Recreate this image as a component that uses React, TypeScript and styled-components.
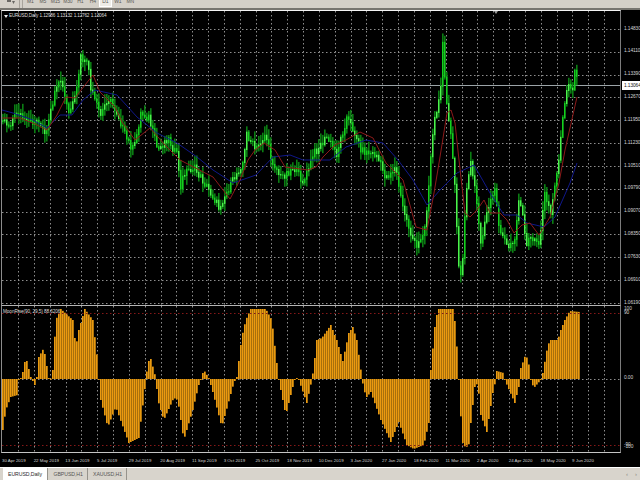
import React from "react";
import styled, { createGlobalStyle } from "styled-components";

type Pt = [number, number];

const GlobalStyle = createGlobalStyle`
  html, body { margin: 0; padding: 0; background: #000; }
  body { font-family: "Liberation Sans", Arial, sans-serif; }
`;

const lerp = (pts: Pt[], x: number) => {
  if (x <= pts[0][0]) return pts[0][1];
  for (let i = 1; i < pts.length; i++) {
    if (x <= pts[i][0]) {
      const [x0, y0] = pts[i - 1];
      const [x1, y1] = pts[i];
      return y0 + ((y1 - y0) * (x - x0)) / (x1 - x0);
    }
  }
  return pts[pts.length - 1][1];
};

const rnd = (n: number) => {
  const v = Math.sin(n * 12.9898) * 43758.5453;
  return v - Math.floor(v);
};

const priceKeys: Pt[] = [
  [2,117],[8,125],[17,110],[25,123],[38,120],[45,137],[53,97],[60,80],[68,113],[75,97],[80,57],[88,67],[90,90],[100,115],[107,97],[117,113],[125,137],[133,150],[140,113],[148,117],[157,150],[167,137],[177,157],[180,190],[183,172],[193,167],[200,177],[213,197],[218,207],[228,188],[236,173],[243,160],[246,133],[255,150],[265,133],[270,157],[280,177],[293,167],[303,182],[313,153],[326,137],[336,153],[346,117],[353,130],[361,150],[376,155],[385,177],[395,167],[401,203],[410,233],[416,248],[425,223],[429,170],[432,133],[440,83],[442,43],[445,97],[449,127],[452,157],[454,180],[459,287],[462,260],[465,193],[470,163],[475,193],[480,243],[485,217],[494,190],[499,230],[507,247],[514,237],[519,193],[525,243],[532,237],[539,243],[544,190],[550,213],[555,180],[560,140],[564,100],[567,80],[572,87],[575,63],[577,87],
];
const redKeys: Pt[] = [
  [2,118],[20,118],[35,124],[47,130],[57,115],[66,97],[75,98],[85,85],[93,75],[100,92],[115,107],[122,122],[135,140],[150,128],[165,145],[180,160],[213,177],[230,199],[240,180],[248,160],[255,150],[264,143],[275,150],[285,167],[308,170],[316,167],[323,157],[335,145],[346,140],[360,132],[373,138],[386,163],[403,180],[416,227],[427,230],[434,193],[440,157],[447,113],[451,110],[455,123],[459,160],[465,213],[470,217],[477,210],[484,200],[490,213],[500,213],[507,220],[514,233],[522,225],[530,223],[539,235],[550,217],[559,183],[565,150],[577,97],
];
const blueKeys: Pt[] = [
  [2,110],[13,113],[33,120],[47,128],[60,115],[72,115],[83,100],[95,90],[117,95],[137,117],[157,133],[177,143],[197,157],[213,170],[233,183],[256,175],[273,157],[290,155],[303,160],[330,160],[346,147],[366,140],[383,143],[398,160],[413,180],[427,205],[440,190],[457,173],[474,165],[490,193],[504,215],[517,215],[527,223],[544,227],[555,217],[570,183],[577,163],
];
const histKeys: Pt[] = [
  [2,430],[5,410],[10,397],[17,395],[18,380],[21,377],[25,357],[30,377],[35,387],[38,357],[43,348],[48,378],[49,383],[52,370],[55,320],[60,309],[72,320],[75,347],[78,330],[84,309],[92,320],[97,363],[98,380],[100,400],[107,427],[115,407],[128,443],[138,438],[145,381],[147,362],[150,359],[155,378],[157,400],[163,420],[173,398],[177,400],[183,440],[192,410],[198,385],[203,370],[208,378],[212,392],[221,427],[233,383],[236,377],[241,337],[245,320],[250,309],[265,309],[271,320],[276,363],[278,380],[285,415],[293,383],[295,377],[298,380],[306,403],[311,380],[313,367],[316,340],[321,338],[330,325],[336,340],[342,361],[348,333],[352,327],[356,340],[361,377],[363,390],[366,397],[370,392],[380,420],[390,442],[398,422],[406,445],[413,449],[423,445],[428,423],[429.5,381],[430,370],[434,327],[437,309],[453,309],[455,333],[457,360],[458,380],[459,403],[462,443],[465,448],[469,443],[470,423],[474,387],[477,383],[480,415],[486,432],[492,393],[495,380],[496,371],[503,373],[504,380],[514,403],[519,383],[520,368],[525,354],[529,368],[530,380],[533,388],[540,380],[542,373],[547,345],[550,340],[557,340],[560,330],[564,320],[569,311],[579,312],
];

const barXs = Array.from({ length: 289 }, (_, i) => 2 + i * 2);
const gridXs = Array.from({ length: 38 }, (_, i) => 18 + i * 15.84);
const mainGridYs = Array.from({ length: 13 }, (_, i) => 29 + i * 22.83);
const prices = ["1.14830","1.14110","1.13390","1.12670","1.11950","1.11230","1.10510","1.09790","1.09070","1.08350","1.07630","1.06910","1.06190"];
const dates = ["30 Apr 2019","22 May 2019","13 Jun 2019","5 Jul 2019","29 Jul 2019","20 Aug 2019","11 Sep 2019","3 Oct 2019","25 Oct 2019","18 Nov 2019","10 Dec 2019","3 Jan 2020","27 Jan 2020","18 Feb 2020","11 Mar 2020","2 Apr 2020","24 Apr 2020","18 May 2020","9 Jun 2020"];
const periods = ["M1","M5","M15","M30","H1","H4","D1","W1","MN"];
const tabs = ["EURUSD,Daily","GBPUSD,H1","XAUUSD,H1"];
const subLabels: [string, number][] = [["100", 1],["90", 5],["0.00", 70],["-90", 137],["-100", 139]];

const toPoints = (pts: Pt[]) => pts.map((p) => p.join(",")).join(" ");

const Screen = styled.div`
  width: 640px;
  height: 480px;
  display: flex;
  flex-direction: column;
  overflow: hidden;
  background: #000;
`;
const Toolbar = styled.div`
  height: 8px;
  flex: none;
  background: #d4d0c8;
  border-bottom: 2px solid #77756f;
  display: flex;
  overflow: hidden;
`;
const ToolIcon = styled.svg`
  width: 9px;
  height: 5px;
  margin-left: 6px;
  flex: none;
`;
const ToolDivider = styled.i`
  width: 1px;
  height: 8px;
  margin-left: ${(p: { $gap: number }) => p.$gap}px;
  background: #a8a49c;
  flex: none;
`;
const PeriodGroup = styled.div`
  display: flex;
  margin-left: 1px;
  height: 8px;
`;
const Period = styled.span<{ $active?: boolean }>`
  width: 12.5px;
  height: 7px;
  box-sizing: border-box;
  text-align: center;
  font-size: 5px;
  line-height: 3px;
  letter-spacing: -0.2px;
  color: #5c5a56;
  background: ${(p) => (p.$active ? "#eeece6" : "transparent")};
  border: 1px solid ${(p) => (p.$active ? "#fff" : "transparent")};
  border-top: 0;
`;
const Pane = styled.div<{ $h: number }>`
  height: ${(p) => p.$h}px;
  flex: none;
  display: grid;
  grid-template-columns: 621px 19px;
`;
const Plot = styled.div<{ $top: string; $bottom?: string }>`
  box-sizing: border-box;
  border-top: 1px solid ${(p) => p.$top};
  border-bottom: ${(p) => (p.$bottom ? `1px solid ${p.$bottom}` : "0")};
  border-left: 1px solid #8c8c8c;
  border-right: 1px solid #7c7c7c;
  margin-left: 1px;
  overflow: hidden;
`;
const ChartSvg = styled.svg`
  display: block;
  width: 619px;
  filter: blur(0.35px);
`;
const Axis = styled.div`
  position: relative;
  display: flex;
  flex-direction: column;
  padding-top: 7.6px;
  font-size: 4.8px;
  letter-spacing: -0.08px;
  color: #d4d4d4;
`;
const PriceLabel = styled.div`
  height: 22.83px;
  line-height: 22.83px;
  padding-left: 3px;
  white-space: nowrap;
  flex: none;
`;
const CurrentPrice = styled.div`
  position: absolute;
  left: 1px;
  top: 71px;
  width: 18px;
  height: 9px;
  line-height: 9px;
  padding-left: 2px;
  box-sizing: border-box;
  background: #fff;
  color: #111;
`;
const SubLabel = styled.div<{ $top: number }>`
  position: absolute;
  left: 3px;
  top: ${(p) => p.$top}px;
  line-height: 6px;
`;
const Title = styled.div`
  position: absolute;
  white-space: nowrap;
  font-size: 4.7px;
  line-height: 6px;
  color: #dcdcdc;
`;
const PlotBox = styled.div`
  position: relative;
`;
const MainTitle = styled(Title)`
  left: 7px;
  top: 2px;
  letter-spacing: -0.2px;
  word-spacing: 0.4px;
`;
const SubTitle = styled(Title)`
  left: 1px;
  top: 3px;
  letter-spacing: -0.08px;
`;
const TitleMark = styled.i`
  position: absolute;
  left: 2px;
  top: 4px;
  border: 2px solid transparent;
  border-top: 3px solid #eee;
  border-bottom: 0;
`;
const TopMark = styled.i`
  position: absolute;
  left: 492px;
  top: 0;
  border: 2.5px solid transparent;
  border-top: 3px solid #9a9a9a;
  border-bottom: 0;
`;
const DateRow = styled.div`
  height: 14px;
  flex: none;
  display: grid;
  grid-template-columns: repeat(19, 31.68px);
  padding-left: 2px;
  align-items: center;
  font-size: 4.4px;
  color: #d4d4d4;
  white-space: nowrap;
`;
const TabBar = styled.div`
  flex: 1;
  display: flex;
  align-items: stretch;
  background: #d8d4cc;
  border-top: 1px solid #fff;
  padding-left: 3px;
  position: relative;
`;
const Tab = styled.div<{ $active?: boolean; $w: number }>`
  width: ${(p) => p.$w}px;
  box-sizing: border-box;
  background: ${(p) => (p.$active ? "#fff" : "transparent")};
  border-right: 1px solid #96938c;
  font-size: 5.2px;
  letter-spacing: -0.08px;
  line-height: 12px;
  padding-left: ${(p) => (p.$active ? 5 : 5.5)}px;
  color: ${(p) => (p.$active ? "#2a2a2a" : "#555")};
  white-space: nowrap;
`;
const TabArrows = styled.div`
  margin-left: auto;
  margin-right: 3px;
  display: flex;
  gap: 7px;
  align-items: center;
  font-size: 6px;
  color: #8c8a84;
`;

const GridV = ({ y1, y2 }: { y1: number; y2: number }) => (
  <g stroke="#8e8e8e" strokeWidth="1" strokeDasharray="1.5 2.5">
    {gridXs.map((x) => (
      <line key={x} x1={Math.round(x) + 0.5} x2={Math.round(x) + 0.5} y1={y1} y2={y2} />
    ))}
  </g>
);

const closeAt = (x: number, i: number) => lerp(priceKeys, x) + (rnd(i + 37) - 0.5) * 8;

const Candles = () => (
  <g>
    {barXs.filter((x) => x <= 577).map((x, i) => {
      const close = closeAt(x, i);
      const open = closeAt(x - 2, i - 1);
      const hi = Math.min(open, close) - 1 - rnd(i + 500) * 9;
      const lo = Math.max(open, close) + 1 + rnd(i + 900) * 9;
      const top = Math.min(open, close);
      const bot = Math.max(open, close) + 1;
      const bright = rnd(i + 211) > 0.6;
      return (
        <g key={x}>
          <rect x={x} y={hi} width="1.6" height={lo - hi} fill="#0b7d13" />
          <rect x={x} y={top} width="1.4" height={bot - top} fill={bright ? "#4cf24c" : "#14d01e"} />
        </g>
      );
    })}
  </g>
);

const MainChart = () => (
  <ChartSvg viewBox="2 11 619 294" height="294">
    <g stroke="#8e8e8e" strokeDasharray="1.5 2.5">
      {mainGridYs.map((y) => (
        <line key={y} x1="2" x2="620" y1={Math.round(y) + 0.5} y2={Math.round(y) + 0.5} />
      ))}
    </g>
    <GridV y1={11} y2={305} />
    <line x1="2" x2="620" y1="85.5" y2="85.5" stroke="#9ca4a8" />
    <Candles />
    <polyline points={toPoints(blueKeys)} fill="none" stroke="#10188a" />
    <polyline points={toPoints(redKeys)} fill="none" stroke="#8c1a1a" />
  </ChartSvg>
);

const SubChart = () => (
  <ChartSvg viewBox="2 306 619 146" height="146">
    <GridV y1={306} y2={452} />
    <line x1="2" x2="620" y1="379.5" y2="379.5" stroke="#8e8e8e" strokeDasharray="1.5 2.5" />
    {barXs.filter((x) => x <= 578).map((x) => {
      const y = lerp(histKeys, x);
      const top = Math.min(y, 379);
      const h = Math.max(Math.abs(y - 379), 1);
      return (
        <g key={x}>
          <rect x={x} y={top} width="1" height={h} fill="#ea9a10" />
          <rect x={x + 1} y={top} width="1" height={h} fill="#a8700c" />
        </g>
      );
    })}
    <g stroke="#861818" strokeDasharray="1.5 2.5">
      <line x1="2" x2="620" y1="313.5" y2="313.5" />
      <line x1="2" x2="620" y1="445.5" y2="445.5" />
    </g>
  </ChartSvg>
);

export default function App() {
  return (
    <Screen>
      <GlobalStyle />
      <Toolbar>
        <ToolIcon viewBox="0 0 9 5">
          <path d="M1 0h4v2H1zM6 1l3 0-1.5 3z" fill="#6a6864" />
        </ToolIcon>
        <ToolDivider $gap={4} />
        <ToolDivider $gap={2} />
        <PeriodGroup>
          {periods.map((p) => (
            <Period key={p} $active={p === "D1"}>{p}</Period>
          ))}
        </PeriodGroup>
      </Toolbar>
      <Pane $h={295}>
        <Plot $top="#f4f4f4">
          <PlotBox>
            <MainChart />
            <TitleMark />
            <MainTitle>EURUSD,Daily  1.12986 1.13132 1.12762 1.13064</MainTitle>
            <TopMark />
          </PlotBox>
        </Plot>
        <Axis>
          {prices.map((p) => (
            <PriceLabel key={p}>{p}</PriceLabel>
          ))}
          <CurrentPrice>1.13064</CurrentPrice>
        </Axis>
      </Pane>
      <Pane $h={148}>
        <Plot $top="#b4b4b4" $bottom="#c4c4c4">
          <PlotBox>
            <SubChart />
            <SubTitle>MoonRise(90, 29.5) 88.6206</SubTitle>
          </PlotBox>
        </Plot>
        <Axis>
          {subLabels.map(([t, y]) => (
            <SubLabel key={t} $top={y}>{t}</SubLabel>
          ))}
        </Axis>
      </Pane>
      <DateRow>
        {dates.map((d) => (
          <span key={d}>{d}</span>
        ))}
      </DateRow>
      <TabBar>
        {tabs.map((t, i) => (
          <Tab key={t} $active={i === 0} $w={i === 0 ? 45 : 39.5}>{t}</Tab>
        ))}
        <TabArrows>
          <span>‹</span>
          <span>›</span>
        </TabArrows>
      </TabBar>
    </Screen>
  );
}
